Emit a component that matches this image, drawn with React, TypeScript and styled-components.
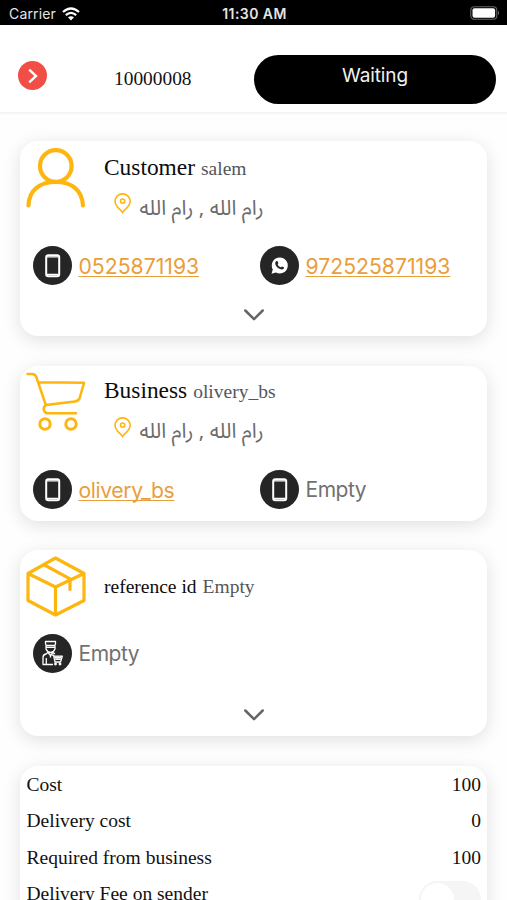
import React from "react";
import styled, { createGlobalStyle } from "styled-components";

const GlobalStyle = createGlobalStyle`
  *, *::before, *::after { box-sizing: border-box; }
  html, body { margin: 0; padding: 0; background: #fff; }
  body { overflow: hidden; }
`;

const serif = `"Liberation Serif", "Times New Roman", serif`;
const sans = `Inter, "Liberation Sans", sans-serif`;
const amber = "#fdb50f";

const Screen = styled.div`
  width: 507px;
  height: 900px;
  overflow: hidden;
  background: #fefefe;
  display: flex;
  flex-direction: column;
`;

const StatusBar = styled.div`
  flex: none;
  height: 25px;
  padding: 2px 7px 0 9px;
  background: #000;
  color: #e4e4e4;
  display: grid;
  grid-template-columns: 1fr auto 1fr;
  align-items: center;
  font: 400 14px/20px ${sans};
`;

const Carrier = styled.div`
  display: flex;
  align-items: center;
  gap: 6px;
  letter-spacing: 0.15px;
`;

const Clock = styled.div`
  font-weight: 600;
  letter-spacing: 0.45px;
`;

const BatteryIcon = styled.svg`
  justify-self: end;
  display: block;
  margin-top: -1px;
`;

const Header = styled.header`
  flex: none;
  height: 89px;
  background: #fff;
  border-bottom: 2px solid #f5f5f5;
  display: grid;
  grid-template-columns: 114px 140px 242px;
  align-items: start;
`;

const BackButton = styled.button`
  width: 29px;
  height: 29px;
  margin: 36px 0 0 18px;
  padding: 0;
  border: 0;
  border-radius: 50%;
  background: #f14e45;
  display: flex;
  align-items: center;
  justify-content: center;
`;

const OrderNumber = styled.div`
  margin-top: 42px;
  font: 19.4px/24px ${serif};
  color: #111;
`;

const StatusPill = styled.div`
  height: 49px;
  margin-top: 29.5px;
  padding-top: 8px;
  border-radius: 25px;
  background: #000;
  color: #f0f0f0;
  text-align: center;
  font: 400 19px/26px ${sans};
  letter-spacing: -0.1px;
`;

const CardList = styled.main`
  padding: 27px 20px 0;
  display: flex;
  flex-direction: column;
  gap: 29.5px;
`;

const Card = styled.section<{ $height: number }>`
  flex: none;
  height: ${(p) => p.$height}px;
  padding: 6px;
  border-radius: 18px;
  background: #fff;
  box-shadow: 0 4px 18px rgba(0, 0, 0, 0.12);
  display: flex;
  flex-direction: column;
`;

const CardHead = styled.div<{ $height: number }>`
  flex: none;
  display: grid;
  grid-template-columns: 60px 1fr;
  column-gap: 18px;
  height: ${(p) => p.$height}px;
`;

const CardIcon = styled.svg`
  display: block;
  width: 60px;
  height: 62px;
  fill: none;
  stroke: ${amber};
`;

const TitleRow = styled.div<{ $top: number }>`
  display: flex;
  align-items: baseline;
  gap: 6px;
  height: 28px;
  margin-top: ${(p) => p.$top}px;
`;

const Title = styled.span<{ $small?: boolean }>`
  font: ${(p) => (p.$small ? 19.5 : 23.4)}px/28px ${serif};
  color: #0c0c0c;
`;

const Subtitle = styled.span`
  font: 19.5px/28px ${serif};
  color: #55565a;
`;

const AddressRow = styled.div`
  display: flex;
  align-items: flex-start;
  gap: 7.5px;
  margin: 12.5px 0 0 10px;
  height: 32px;
`;

const Address = styled.span`
  display: block;
  margin-top: 1.5px;
  font: 20.7px/28px "Noto Sans Arabic", "DejaVu Sans", sans-serif;
  color: #6b6b6b;
  white-space: nowrap;
`;

const Contacts = styled.div`
  flex: none;
  display: grid;
  grid-template-columns: 227px 1fr;
  padding-left: 6.5px;
  height: 39px;
`;

const Contact = styled.div`
  display: flex;
  align-items: center;
  gap: 7px;
`;

const Badge = styled.span`
  flex: none;
  width: 39px;
  height: 39px;
  border-radius: 50%;
  background: #252525;
  display: flex;
  align-items: center;
  justify-content: center;
`;

const ContactLink = styled.a<{ $track?: number }>`
  font: 400 21.2px/28px ${sans};
  letter-spacing: ${(p) => p.$track ?? 0}px;
  padding-top: 1px;
  color: #e99e3c;
  text-decoration: underline;
  text-decoration-thickness: 1.3px;
  text-underline-offset: 2px;
  text-decoration-skip-ink: none;
`;

const ContactText = styled.span`
  padding-top: 1px;
  font: 400 21px/28px ${sans};
  letter-spacing: -0.45px;
  color: #717171;
`;

const Expand = styled.button`
  margin: auto auto 6px;
  padding: 0;
  border: 0;
  background: none;
  display: block;
  height: 18px;
`;

const CostRow = styled.div`
  flex: none;
  display: flex;
  justify-content: space-between;
  height: 36.5px;
  padding-left: 0.5px;
  font: 19.5px/25px ${serif};
  color: #111;
`;

const Switch = styled.span`
  width: 62px;
  height: 37px;
  padding: 2px;
  border-radius: 19px;
  background: #f5f5f5;
`;

const Knob = styled.span`
  display: block;
  width: 33px;
  height: 33px;
  border-radius: 50%;
  background: #fff;
`;

const PinIcon = () => (
  <svg width="18" height="21" viewBox="0 0 18 21" fill="none" stroke={amber} strokeWidth="1.6">
    <path d="M8.5 19.5 C7 16.5 1 14 1 8.3 A7.6 7.4 0 0 1 16.2 8.3 C16.2 14 10 16.5 8.5 19.5Z" />
    <circle cx="8.6" cy="8.1" r="2.1" />
  </svg>
);

const PhoneBadge = () => (
  <Badge>
    <svg width="17" height="25" viewBox="0 0 17 25" fill="none" stroke="#fff">
      <rect x="2.2" y="2.2" width="13" height="21" rx="2" strokeWidth="2" />
      <path d="M3 3.9H14.4M3 21.5H14.4" strokeWidth="1.3" />
    </svg>
  </Badge>
);

const WhatsAppBadge = () => (
  <Badge>
    <svg width="18" height="18" viewBox="0 0 18 18">
      <path d="M9.7 1.5A8 8 0 0 0 2.8 13.5L1.5 17.7L5.9 16.5A8 8 0 1 0 9.7 1.5Z" fill="#fff" />
      <path
        d="M6.1 5.3C6.8 4.6 7.5 4.9 7.7 5.5L8.3 6.9C8.5 7.5 7.7 7.9 7.7 8.4C8.3 9.8 9.3 10.7 10.7 11.2C11.2 11.3 11.5 10.3 12.1 10.4L13.8 11.2C14.3 11.5 13.9 12.5 13.4 13C10.8 14.8 4.5 10.3 5.3 6.7C5.4 6.1 5.7 5.6 6.1 5.3Z"
        fill="#252525"
      />
    </svg>
  </Badge>
);

const CourierBadge = () => (
  <Badge>
    <svg width="21" height="26" viewBox="0 0 21 26" fill="none" stroke="#fff" strokeWidth="1.3" strokeLinejoin="round">
      <path d="M3.5 1.5H13.5V4L12.5 5.5H4.5L3.5 4ZM4 5.5H13V9Q11.5 12.5 8.5 12.5Q5.5 12.5 4 9ZM4.5 7.3H12.5" />
      <path d="M6 12.5L4 14Q1 14.5 1 17.5V24.5H11M6 12.5L8.5 15.5L11 12.5L13 14M4.3 18V24.5M8.5 15.5V17.5" />
      <path d="M9.5 15.2H11.5L13 22H18.5L20.3 16.2H12" />
      <path d="M12.7 17.4H19M13.2 19.2H18.7" strokeWidth="1.6" />
      <circle cx="13.5" cy="24" r="0.8" />
      <circle cx="18" cy="24" r="0.8" />
    </svg>
  </Badge>
);

const ExpandButton = () => (
  <Expand aria-label="Expand">
    <svg width="22" height="18" viewBox="0 0 22 18" fill="none" stroke="#666" strokeWidth="2.5" strokeLinecap="round" strokeLinejoin="round">
      <path d="M2.3 4.5L11 13.2L19.7 4.5" />
    </svg>
  </Expand>
);

const CustomerIcon = () => (
  <CardIcon viewBox="0 0 60 62" strokeWidth="4.2" strokeLinecap="round">
    <circle cx="29.8" cy="19" r="15.8" />
    <path d="M2.5 58.5C3 43 14 35 29.8 35S56 43 57 58.5" />
  </CardIcon>
);

const CartIcon = () => (
  <CardIcon viewBox="0 0 60 62" strokeWidth="2.5" strokeLinecap="round" strokeLinejoin="round">
    <path d="M1.5 2H6Q9.5 2 10.5 5.5L19.8 33L49 29.5Q53 29 53.8 25.5L58 10.8L12.5 10.2" />
    <path d="M19.8 33Q16.5 36 18.3 39Q19 41.2 22.5 41.2H50" />
    <circle cx="19" cy="52" r="5.2" strokeWidth="3" />
    <circle cx="45" cy="52" r="5.2" strokeWidth="3" />
  </CardIcon>
);

const BoxIcon = () => (
  <CardIcon viewBox="0 0 60 62" strokeWidth="3.2" strokeLinejoin="round" strokeLinecap="round">
    <path d="M29.5 2L58 17.5V44.5L29.5 59L2 44.5V17.5ZM2 17.5L29.5 31L58 17.5M29.5 31V59" />
    <path d="M18.5 9L44 22.8V33.5" />
  </CardIcon>
);

const AddressLine = () => (
  <AddressRow>
    <PinIcon />
    <Address dir="rtl">رام الله , رام الله</Address>
  </AddressRow>
);

const costs = [
  ["Cost", "100"],
  ["Delivery cost", "0"],
  ["Required from business", "100"],
];

export default function App() {
  return (
    <>
      <GlobalStyle />
      <Screen>
        <StatusBar>
          <Carrier>
            <span>Carrier</span>
            <svg width="18" height="14" viewBox="0 0 18 14" fill="none" stroke="#fff" strokeWidth="2.3">
              <path d="M1 5Q9-2 17 5M3.8 8.1Q9 3.6 14.2 8.1" />
              <path d="M6 10.3Q9 8 12 10.3L9 13.5Z" fill="#fff" stroke="none" />
            </svg>
          </Carrier>
          <Clock>11:30 AM</Clock>
          <BatteryIcon width="31" height="14" viewBox="0 0 31 14">
            <rect x="1.8" y="0.7" width="26" height="12.6" rx="3.5" fill="none" stroke="#666" strokeWidth="1.1" />
            <rect x="3.5" y="2.3" width="22.6" height="9.4" rx="2" fill="#fff" />
            <path d="M29 4.8Q31 7 29 9.2Z" fill="#777" />
          </BatteryIcon>
        </StatusBar>
        <Header>
          <BackButton aria-label="Back">
            <svg width="12" height="16" viewBox="0 0 12 16" fill="none" stroke="#fff" strokeWidth="2.4">
              <path d="M2.2 1.7L9 8L2.2 14.3" />
            </svg>
          </BackButton>
          <OrderNumber>10000008</OrderNumber>
          <StatusPill>Waiting</StatusPill>
        </Header>
        <CardList>
          <Card $height={195}>
            <CardHead $height={98.5}>
              <CustomerIcon />
              <div>
                <TitleRow $top={5.5}>
                  <Title>Customer</Title>
                  <Subtitle>salem</Subtitle>
                </TitleRow>
                <AddressLine />
              </div>
            </CardHead>
            <Contacts>
              <Contact>
                <PhoneBadge />
                <ContactLink>0525871193</ContactLink>
              </Contact>
              <Contact>
                <WhatsAppBadge />
                <ContactLink>972525871193</ContactLink>
              </Contact>
            </Contacts>
            <ExpandButton />
          </Card>
          <Card $height={155}>
            <CardHead $height={98.5}>
              <CartIcon />
              <div>
                <TitleRow $top={4.5}>
                  <Title>Business</Title>
                  <Subtitle>olivery_bs</Subtitle>
                </TitleRow>
                <AddressLine />
              </div>
            </CardHead>
            <Contacts>
              <Contact>
                <PhoneBadge />
                <ContactLink $track={-0.4}>olivery_bs</ContactLink>
              </Contact>
              <Contact>
                <PhoneBadge />
                <ContactText>Empty</ContactText>
              </Contact>
            </Contacts>
          </Card>
          <Card $height={186}>
            <CardHead $height={77.5}>
              <BoxIcon />
              <TitleRow $top={16.5}>
                <Title $small>reference id</Title>
                <Subtitle>Empty</Subtitle>
              </TitleRow>
            </CardHead>
            <Contacts>
              <Contact>
                <CourierBadge />
                <ContactText>Empty</ContactText>
              </Contact>
            </Contacts>
            <ExpandButton />
          </Card>
          <Card $height={220}>
            {costs.map(([label, value]) => (
              <CostRow key={label}>
                <span>{label}</span>
                <span>{value}</span>
              </CostRow>
            ))}
            <CostRow>
              <span>Delivery Fee on sender</span>
              <Switch>
                <Knob />
              </Switch>
            </CostRow>
          </Card>
        </CardList>
      </Screen>
    </>
  );
}
